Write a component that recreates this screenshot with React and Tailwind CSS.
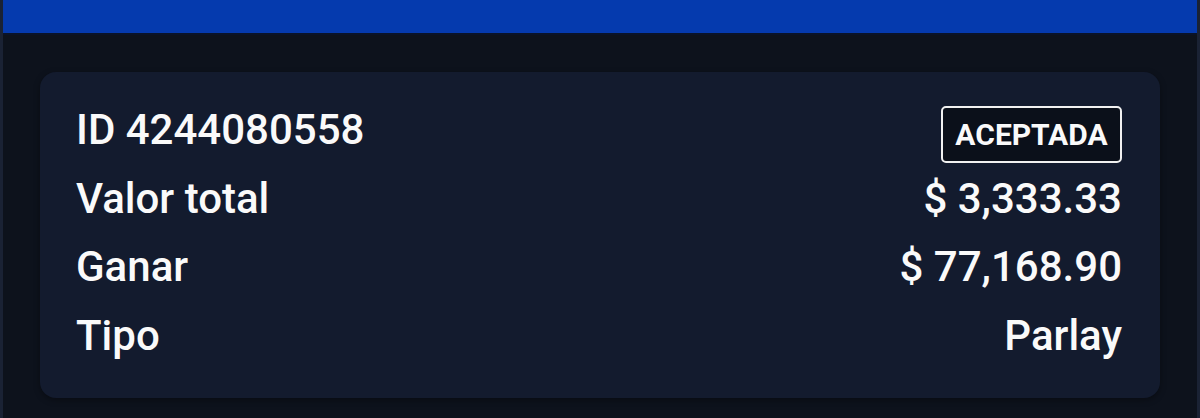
const rows = [
  { label: 'Valor total', value: '$ 3,333.33' },
  { label: 'Ganar', value: '$ 77,168.90' },
  { label: 'Tipo', value: 'Parlay' },
]

export default function App() {
  return (
    <div className="h-[418px] w-[1200px] bg-[#1a2234] px-[3px] font-['Roboto',sans-serif]">
      <div className="flex h-full flex-col bg-[#0d121c]">
        <div className="h-[35px] border-b-2 border-[#0a1328] bg-[#053aae]" />
        <div className="px-[37px] pt-[37px]">
          <div className="h-[326px] rounded-[16px] bg-[#131b2e] pl-[36px] pr-[38px] pt-[24px] text-[42px] font-medium leading-[68.7px] text-[#fafafa] shadow-[0_2px_6px_rgba(0,0,0,0.35)]">
            <div className="flex items-center justify-between">
              <span>ID 4244080558</span>
              <span className="mt-[9px] flex h-[57px] w-[181px] items-center justify-center rounded-[5px] border-[2.5px] border-[#f1f1f1] bg-[#0b101a] text-[30px] font-bold leading-none">
                ACEPTADA
              </span>
            </div>
            {rows.map((r) => (
              <div key={r.label} className="flex items-center justify-between">
                <span>{r.label}</span>
                <span>{r.value}</span>
              </div>
            ))}
          </div>
        </div>
      </div>
    </div>
  )
}
